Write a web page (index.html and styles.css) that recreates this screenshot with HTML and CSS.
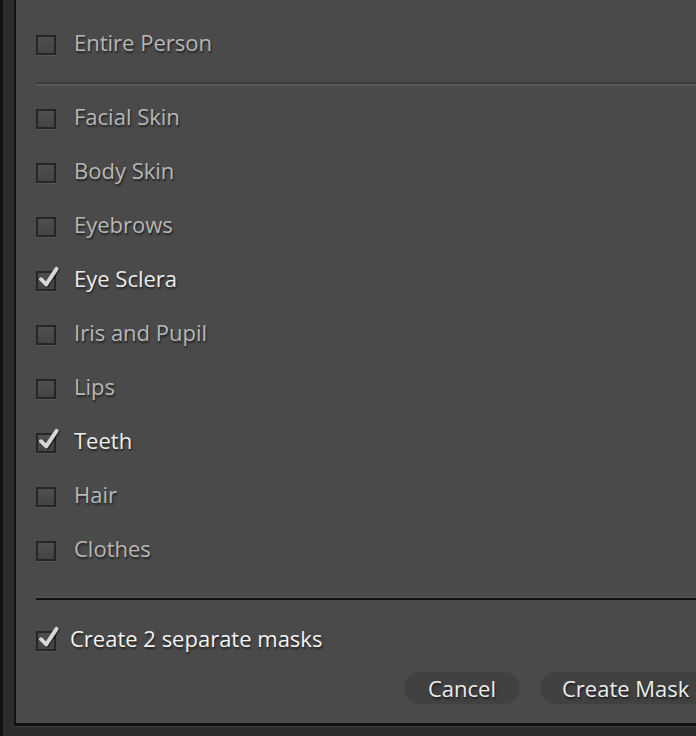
FILE: index.html
```html
<!DOCTYPE html>
<html lang="en">
<head>
<meta charset="utf-8">
<title>Select People Parts</title>
<link rel="stylesheet" href="styles.css">
</head>
<body>
<div class="page">
  <div class="panel">
    <div class="row"><span class="box"></span><span class="label">Entire Person</span></div>
    <div class="sep"></div>
    <div class="list">
      <div class="row"><span class="box"></span><span class="label">Facial Skin</span></div>
      <div class="row"><span class="box"></span><span class="label">Body Skin</span></div>
      <div class="row"><span class="box"></span><span class="label">Eyebrows</span></div>
      <div class="row checked"><span class="box"><svg class="tick" viewBox="0 0 20 20"><path d="M3.5 11.5 L8 16 L17 2.5" /></svg></span><span class="label">Eye Sclera</span></div>
      <div class="row"><span class="box"></span><span class="label">Iris and Pupil</span></div>
      <div class="row"><span class="box"></span><span class="label">Lips</span></div>
      <div class="row checked"><span class="box"><svg class="tick" viewBox="0 0 20 20"><path d="M3.5 11.5 L8 16 L17 2.5" /></svg></span><span class="label">Teeth</span></div>
      <div class="row"><span class="box"></span><span class="label">Hair</span></div>
      <div class="row"><span class="box"></span><span class="label">Clothes</span></div>
    </div>
    <div class="sep-dark"></div>
    <div class="row checked option"><span class="box"><svg class="tick" viewBox="0 0 20 20"><path d="M3.5 11.5 L8 16 L17 2.5" /></svg></span><span class="label">Create 2 separate masks</span></div>
    <div class="actions">
      <button class="btn cancel">Cancel</button>
      <button class="btn primary">Create Mask</button>
    </div>
  </div>
  <div class="foot"></div>
</div>
</body>
</html>
```
FILE: styles.css
```css
html, body {
  margin: 0;
  padding: 0;
  width: 696px;
  height: 736px;
  overflow: hidden;
  background: #2c2c2c;
}
.page {
  position: relative;
  width: 696px;
  height: 736px;
  box-sizing: border-box;
  border-left: 3px solid #121212;
  background: #2c2c2c;
  font-family: "Open Sans", "Noto Sans", sans-serif;
}
.panel {
  margin-left: 11px;
  width: 700px;
  height: 726px;
  box-sizing: border-box;
  background: #4a4a4a;
  border-left: 2px solid #111;
  border-bottom: 3px solid #111;
  padding: 16px 0 0 20px;
  display: flex;
  flex-direction: column;
}
.foot {
  height: 1px;
  margin-left: 11px;
  background: #3a3a3a;
}
.row {
  height: 54px;
  display: flex;
  align-items: center;
}
.box {
  position: relative;
  width: 16px;
  height: 16px;
  border: 2px solid #262626;
  background: linear-gradient(#4f4f4f, #444);
  box-shadow: 0 1px 0 #555;
  flex: none;
  margin-top: 4px;
}
.tick {
  position: absolute;
  left: -1px;
  top: -7px;
  width: 23px;
  height: 23px;
  overflow: visible;
}
.tick path {
  fill: none;
  stroke: #d6d6d6;
  stroke-width: 3.4;
  stroke-linecap: round;
  stroke-linejoin: round;
  filter: drop-shadow(1px 1px 0.5px rgba(0,0,0,0.5));
}
.label {
  margin-left: 18px;
  margin-top: -2px;
  font-size: 22px;
  color: #b6b6b6;
  text-shadow: 1px 2px 2px rgba(0,0,0,0.55);
}
.checked .label {
  color: #ececec;
}
.sep {
  margin-top: 12px;
  height: 2px;
  border-bottom: 2px solid #565656;
  background: #3c3c3c;
  margin-bottom: 4px;
}
.list {
  display: flex;
  flex-direction: column;
}
.sep-dark {
  margin-top: 21px;
  height: 2px;
  background: #111;
  border-top: 1px solid #555;
}
.option {
  margin-top: 12px;
}
.option .label {
  margin-left: 14px;
  color: #f2f2f2;
}
.actions {
  display: flex;
  gap: 20px;
  margin-top: 6px;
  margin-left: 368px;
}
.btn {
  height: 32px;
  border: none;
  border-radius: 16px;
  background: #414141;
  color: #ececec;
  font-family: "Open Sans", "Noto Sans", sans-serif;
  font-size: 22px;
  text-shadow: 1px 2px 2px rgba(0,0,0,0.55);
  padding: 0 22px;
  line-height: 30px;
  flex: none;
}
.cancel {
  width: 116px;
}
```
